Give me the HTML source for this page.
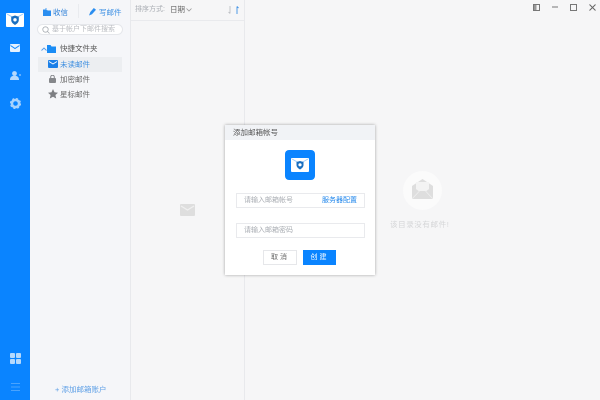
<!DOCTYPE html>
<html><head><meta charset="utf-8"><style>
*{box-sizing:border-box}
html,body{margin:0;padding:0;width:600px;height:400px;overflow:hidden;background:#f6f6f7;font-family:"Liberation Sans","Noto Sans CJK SC",sans-serif}
div,span,svg{position:absolute}
#r{left:0;top:0;width:600px;height:400px;filter:blur(.35px);background:#f6f6f7}
.t{white-space:nowrap;line-height:12px}
</style></head><body><div id="r">
<div style="left:0;top:0;width:30px;height:400px;background:#0a84ff"></div>
<div style="left:30px;top:0;width:100px;height:400px;background:#f5f6f9"></div>
<div style="left:130px;top:0;width:1px;height:400px;background:#e8e9ec"></div>
<div style="left:244px;top:0;width:1px;height:400px;background:#e8e9ec"></div>
<div style="left:131px;top:20px;width:113px;height:1px;background:#e9eaed"></div>

<svg style="left:6px;top:13px" width="18" height="14" viewBox="0 0 18 14"><rect width="18" height="14" rx="1" fill="#fff"/><path d="M1 1l8 4.500L17 1" fill="none" stroke="#9cccfb" stroke-width="1"/><path d="M9 2.500l3.800 1.200v3.200c0 2.400-1.800 4-3.800 5.100-2-1.100-3.800-2.700-3.800-5.100V3.700z" fill="#1a6fc0"/><circle cx="9" cy="6.800" r="1.700" fill="#fff"/></svg>
<svg style="left:10px;top:44px" width="10" height="8" viewBox="0 0 10 8"><rect width="10" height="8" rx="1" fill="#e4f1ff"/><path d="M.5 1.500l4.500 3 4.500-3" fill="none" stroke="#0a84ff" stroke-width="1"/></svg>
<svg style="left:10px;top:71px" width="11" height="9" viewBox="0 0 11 9"><circle cx="4.500" cy="2.500" r="2.400" fill="#b5d9fd"/><path d="M0 9c0-3 1.800-4.200 4.500-4.200S9 6 9 9z" fill="#b5d9fd"/><rect x="9" y="3.500" width="2" height="1" fill="#b5d9fd"/></svg>
<svg style="left:10px;top:98px" width="11" height="11" viewBox="0 0 11 11"><circle cx="5.500" cy="5.500" r="3.600" fill="none" stroke="#a8d2fc" stroke-width="2.600"/><circle cx="5.500" cy="5.500" r="5" fill="none" stroke="#a8d2fc" stroke-width="1.200" stroke-dasharray="2 2"/></svg>
<svg style="left:10px;top:353px" width="11" height="11" viewBox="0 0 11 11"><g fill="#b5d9fd"><rect width="5" height="5" rx="1"/><rect x="6" width="5" height="5" rx="1"/><rect y="6" width="5" height="5" rx="1"/><rect x="6" y="6" width="5" height="5" rx="1"/></g></svg>
<svg style="left:11px;top:383px" width="9" height="8" viewBox="0 0 9 8"><path d="M0 .5h9M0 4h9M0 7.500h9" stroke="#4aa3fd" stroke-width="1"/></svg>

<svg style="left:43px;top:8px" width="8" height="8" viewBox="0 0 8 8"><path d="M0 1.500h3l1 1h4V8H0z" fill="#2b8ef0"/><path d="M3 0v3.500M1.700 2.200L3 3.500l1.300-1.300" stroke="#2b8ef0" fill="none" stroke-width=".8"/></svg>
<div class="t" style="left:53px;top:6.500px;font-size:7.500px;color:#2b7fd8">收信</div>
<div style="left:78px;top:4px;width:1px;height:14px;background:#e9ebef"></div>
<svg style="left:89px;top:8px" width="7" height="8" viewBox="0 0 7 8"><path d="M0 7.500l1.300-3.500L4.800 0 7 1.800 3 6.200z" fill="#2b8ef0"/></svg>
<div class="t" style="left:99px;top:6.500px;font-size:7.500px;color:#3d90e4">写邮件</div>
<div style="left:37px;top:24px;width:86px;height:11px;border-radius:6px;background:#fff;border:1px solid #e5e7eb"></div>
<svg style="left:42px;top:26px" width="8" height="8" viewBox="0 0 8 8"><circle cx="3.500" cy="3.500" r="2.700" fill="none" stroke="#a8adb3" stroke-width=".8"/><path d="M5.500 5.500L7.500 7.500" stroke="#a8adb3" stroke-width=".8"/></svg>
<div class="t" style="left:52px;top:24px;font-size:7px;color:#b8bbc0">基于帐户下邮件搜索</div>

<svg style="left:41px;top:47px" width="6" height="4" viewBox="0 0 6 4"><path d="M.5 3.500L3 1l2.500 2.500" fill="none" stroke="#4f99e8" stroke-width=".9"/></svg>
<svg style="left:47px;top:45px" width="9" height="8" viewBox="0 0 9 8"><path d="M0 0h3.500l1 1.500H9V8H0z" fill="#1a8cf5"/></svg>
<div class="t" style="left:60px;top:43px;font-size:7.500px;color:#555">快捷文件夹</div>
<div style="left:38px;top:57px;width:84px;height:15px;background:#eceef1"></div>
<svg style="left:48px;top:60px" width="10" height="8" viewBox="0 0 10 8"><rect width="10" height="8" rx="1" fill="#1a7fe8"/><path d="M1 1.500l4 2.500 4-2.500" fill="none" stroke="#fff" stroke-width=".9"/></svg>
<div class="t" style="left:60px;top:58.500px;font-size:7.500px;color:#3b8de0">未读邮件</div>
<svg style="left:49px;top:75px" width="7" height="8" viewBox="0 0 7 8"><rect y="3" width="7" height="5" rx="1" fill="#85878b"/><path d="M1.700 3.500V2a1.800 1.800 0 013.600 0v1.500" fill="none" stroke="#85878b"/></svg>
<div class="t" style="left:60px;top:73.500px;font-size:7.500px;color:#666">加密邮件</div>
<svg style="left:48px;top:89px" width="10" height="10" viewBox="0 0 10 10"><path d="M5 0l1.500 3.300 3.500.4-2.600 2.300.8 3.500L5 7.700 1.800 9.500l.8-3.500L0 3.700l3.500-.4z" fill="#7d7f83"/></svg>
<div class="t" style="left:60px;top:88.500px;font-size:7.500px;color:#666">星标邮件</div>
<div class="t" style="left:55px;top:384px;font-size:7.500px;color:#5d9fe6"><span style="position:static">+</span> 添加邮箱账户</div>

<div class="t" style="left:135px;top:4px;font-size:7px;color:#a9adb3">排序方式:</div>
<div class="t" style="left:170px;top:4px;font-size:7.500px;color:#666">日期</div>
<svg style="left:186px;top:8px" width="6" height="4" viewBox="0 0 6 4"><path d="M.5.500L3 3 5.500.5" fill="none" stroke="#999" stroke-width=".8"/></svg>
<svg style="left:228px;top:6px" width="4" height="8" viewBox="0 0 4 8"><path d="M2 0v7.500M.5 6L2 7.500" fill="none" stroke="#b5b8bc" stroke-width=".8"/></svg>
<svg style="left:235px;top:6px" width="4" height="8" viewBox="0 0 4 8"><path d="M2 8V.5M3.500 2L2 .5" fill="none" stroke="#3d90e4" stroke-width=".9"/></svg>

<svg style="left:180px;top:204px" width="15" height="12" viewBox="0 0 15 12"><rect width="15" height="12" rx="1" fill="#dedede"/><path d="M1 2l6.500 4L14 2" fill="none" stroke="#f0f0f0" stroke-width="1.200"/></svg>

<div style="left:403px;top:171px;width:39px;height:39px;border-radius:50%;background:#fbfbfb"></div>
<svg style="left:412px;top:179px" width="21" height="20" viewBox="0 0 21 20"><path d="M0 7L10.500 0 21 7v13H0z" fill="#dedede"/><rect x="4" y="3" width="13" height="9" fill="#f3f3f3"/><path d="M0 7l10.500 8L21 7v13H0z" fill="#dedede"/><path d="M0 20l7.500-8M21 20l-7.500-8" stroke="#eeeeee" stroke-width=".8"/></svg>
<div class="t" style="left:390px;top:219px;font-size:7.500px;letter-spacing:.6px;color:#d4d5d7">该目录没有邮件!</div>

<svg style="left:533px;top:4px" width="7" height="7" viewBox="0 0 7 7"><rect x=".5" y=".5" width="6" height="6" fill="none" stroke="#777"/><rect x="1" y="1" width="2.500" height="5" fill="#999"/></svg>
<svg style="left:552px;top:6px" width="6" height="2" viewBox="0 0 6 2"><path d="M0 1h6" stroke="#777"/></svg>
<svg style="left:570px;top:4px" width="7" height="7" viewBox="0 0 7 7"><rect x=".5" y=".5" width="6" height="6" fill="none" stroke="#777"/></svg>
<svg style="left:589px;top:4px" width="7" height="7" viewBox="0 0 7 7"><path d="M.5.500l6 6M6.500.5l-6 6" stroke="#666"/></svg>

<div style="left:225px;top:125px;width:150px;height:150px;background:#fff;box-shadow:0 0 3px rgba(0,0,0,.35)"></div>
<div style="left:225px;top:125px;width:150px;height:15px;background:#f1f3f6"></div>
<div class="t" style="left:233px;top:127px;font-size:7.500px;color:#555">添加邮箱帐号</div>
<div style="left:285px;top:150px;width:30px;height:30px;border-radius:4px;background:#0a84ff"></div>
<svg style="left:291px;top:158px" width="18" height="14" viewBox="0 0 18 14"><rect width="18" height="14" rx="1" fill="#fff"/><path d="M1 1l8 4.500L17 1" fill="none" stroke="#9cccfb" stroke-width=".8"/><path d="M9 3l3.500 1v3c0 2-1.700 3.500-3.500 4.500C7.200 10.500 5.500 9 5.500 7V4z" fill="#1a6fc0"/><circle cx="9" cy="6.800" r="1.600" fill="#fff"/></svg>
<div style="left:236px;top:193px;width:129px;height:15px;border:1px solid #e9eaed;background:#fff"></div>
<div class="t" style="left:244px;top:195px;font-size:7px;color:#a8acb2">请输入邮箱帐号</div>
<div class="t" style="left:322px;top:195px;font-size:7px;color:#1f86ec">服务器配置</div>
<div style="left:236px;top:223px;width:129px;height:15px;border:1px solid #e9eaed;background:#fff"></div>
<div class="t" style="left:244px;top:225px;font-size:7px;color:#a8acb2">请输入邮箱密码</div>
<div style="left:263px;top:250px;width:34px;height:15px;border:1px solid #e6e7ea;background:#fff"></div>
<div class="t" style="left:263px;top:252px;width:34px;text-align:center;font-size:7px;letter-spacing:2px;color:#666">取消</div>
<div style="left:303px;top:250px;width:33px;height:15px;background:#0a84ff"></div>
<div class="t" style="left:303px;top:252px;width:33px;text-align:center;font-size:7px;letter-spacing:2px;color:#fff">创建</div>
</div></body></html>
